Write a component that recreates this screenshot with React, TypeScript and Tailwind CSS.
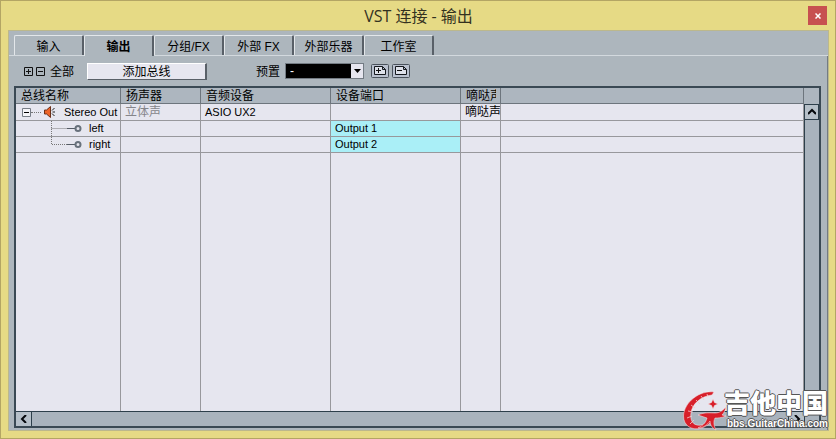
import React, { useState } from 'react';
import { clsx } from 'clsx';

const TABS = ['输入', '输出', '分组/FX', '外部 FX', '外部乐器', '工作室'];

const COLUMNS = ['总线名称', '扬声器', '音频设备', '设备端口', '嘀哒声', ''];

const CHANNELS = [
    { name: 'left', port: 'Output 1' },
    { name: 'right', port: 'Output 2' },
];

const HEAD_CELL = "h-4 p-0 pl-[5px] text-left font-normal whitespace-nowrap overflow-hidden border-r border-b border-[#6d757d] bg-[#adb6bf]";
const CELL = "h-4 p-0 pl-1 text-[11px] leading-[15px] whitespace-nowrap overflow-hidden border-r border-b border-[#98989c]";
const BODY_COLUMN = "p-0 border-r border-[#98989c]";

function SpeakerIcon() {
    return (
        <svg className="w-3 h-3 shrink-0" viewBox="0 0 12 12">
            <path d="M.5 4h2L6.500.5v11L2.500 8H.5z" fill="#ee6428" stroke="#6a2f18" />
            <path d="M8 4.500l2.500-2.500M8.500 6H11M8 7.500L10.500 10" stroke="#222" fill="none" />
        </svg>
    );
}

function PresetIcon({ plus }: { plus?: boolean }) {
    return (
        <svg className="w-[18px] h-[14px]" viewBox="0 0 18 14">
            <rect x=".5" y=".5" width="17" height="13" rx="1" fill="#b9c1cf" stroke="#4a525c" />
            <path d="M3.500 2.500h8l3 3v5h-11zM11.500 2.500v3h3" fill="#dde1ea" stroke="#14181e" />
            <path d={plus ? 'M5 6.500h5M7.500 4v5' : 'M5 6.500h5'} stroke="#111" />
        </svg>
    );
}

function Arrow({ d }: { d: string }) {
    return (
        <svg className="w-2 h-2" viewBox="0 0 8 8">
            <path d={d} fill="none" stroke="#05080c" strokeWidth="2" />
        </svg>
    );
}

function BusTable() {
    return (
        <table className="w-full table-fixed border-separate border-spacing-0 bg-[#e6e6ef]">
            <colgroup>
                <col className="w-[105px]" />
                <col className="w-[80px]" />
                <col className="w-[130px]" />
                <col className="w-[130px]" />
                <col className="w-[40px]" />
                <col />
            </colgroup>
            <thead>
                <tr>
                    {COLUMNS.map((name, i) => (
                        <th key={i} className={HEAD_CELL}>
                            <div className="mr-1 overflow-hidden h-[15px] leading-[17px]">{name}</div>
                        </th>
                    ))}
                </tr>
            </thead>
            <tbody>
                <tr className="h-[17px]">
                    <td className={CELL}>
                        <div className="flex items-center h-4 pl-[2px]">
                            <button aria-label="折叠" className="flex">
                                <svg className="w-[9px] h-[9px]" viewBox="0 0 9 9">
                                    <path d="M.5.5h8v8h-8z" fill="#f4f4f8" stroke="#777d86" />
                                    <path d="M2 4.500h5" stroke="#000" />
                                </svg>
                            </button>
                            <span className="w-[10px] mr-[3px] border-t border-dotted border-[#777]" />
                            <SpeakerIcon />
                            <span className="ml-2">Stereo Out</span>
                        </div>
                    </td>
                    <td className={CELL}>
                        <span className="text-[12px] text-[#85858a]">立体声</span>
                    </td>
                    <td className={CELL}>ASIO UX2</td>
                    <td className={CELL} />
                    <td className={CELL}>
                        <span className="text-[12px]">嘀哒声</span>
                    </td>
                    <td className={CELL} />
                </tr>
                {CHANNELS.map((ch, i) => (
                    <tr key={ch.name}>
                        <td className={CELL}>
                            <div className="flex items-center h-[15px] pl-[30px]">
                                <svg className="w-8 h-[15px]" viewBox="0 0 32 15">
                                    <path d={i === 0 ? 'M1.500 0v15M1.500 7.500H17' : 'M1.500 0v7.500H17'} fill="none" stroke="#777" strokeDasharray="1 1" />
                                    <path d="M17 7.500h8" stroke="#555c66" />
                                    <circle cx="28" cy="7.500" r="2.500" fill="#e6e6ef" stroke="#68717c" strokeWidth="2" />
                                </svg>
                                <span className="ml-[7px]">{ch.name}</span>
                            </div>
                        </td>
                        <td className={CELL} />
                        <td className={CELL} />
                        <td className={clsx(CELL, "bg-[#aaeff7]")}>{ch.port}</td>
                        <td className={CELL} />
                        <td className={CELL} />
                    </tr>
                ))}
                {/* empty area below the last bus */}
                <tr>
                    {COLUMNS.map((_, i) => (
                        <td key={i} className={BODY_COLUMN} />
                    ))}
                </tr>
            </tbody>
        </table>
    );
}

function Watermark() {
    return (
        <div className="absolute right-[7px] bottom-[7px] flex items-end pointer-events-none">
            <svg className="w-[44px] h-[40px]" viewBox="0 0 44 40">
                <g fill="#d81f2a" stroke="#f5f0f2" strokeWidth=".5">
                    <path d="M31 1C17-1 1 11 .5 25 .5 35 9 40 19 37c5-2 9-5 11-9l-4 1c-3 4-8 6-12 5-5-1-7-6-6-12C9 13 18 5 29 4z" />
                    <path d="M30 8l1.500 3.500L35 13l-3.500 1.500L30 18l-1.500-3.500L25 13l3.500-1.500z" />
                    <path d="M15 24c7-3 12-2 17-2 5 0 8-3 11-6-1 4-2 6-4 8l4 1c-5 2-8 2-11 2-2 4-1 8 1 12-4-2-6-5-6-9-3 4-7 7-12 7 6-3 8-6 9-10-3-1-6-2-9-3z" />
                </g>
                <path d="M13 9l4 4M18 5l3 4M8 14l4 3M5 20l5 1M4 27l5-2M7 33l4-4M24 3l1 3" stroke="#f3cccf" strokeWidth=".8" />
            </svg>
            <div className="-ml-[3px] flex flex-col items-end text-white [text-shadow:1px_0_#555,-1px_0_#555,0_1px_#555,0_-1px_#555]">
                <div className="text-[26px] leading-[26px] font-black">吉他中国</div>
                <div className="text-[10px] leading-[14px] font-bold">bbs.GuitarChina.com</div>
            </div>
        </div>
    );
}

export default function App() {
    const [active, setActive] = useState(1);

    return (
        <div className="relative min-h-screen flex flex-col pl-[7px] pr-[6px] pb-[7px] bg-[#e6da85] border border-[#b3a564] font-['Liberation_Sans','Noto_Sans_CJK_SC',sans-serif] text-[12px] text-black">
            <header className="relative h-[29px] flex items-center justify-center shrink-0">
                <h1 className="text-[16px] leading-5 text-[#33311f] font-['Open_Sans','Noto_Sans_CJK_SC',sans-serif]">VST 连接 - 输出</h1>
                <button aria-label="关闭" className="absolute right-[2px] top-[5px] w-[19px] h-[19px] flex items-center justify-center bg-[#c75050]">
                    <svg className="w-[6px] h-[6px]" viewBox="0 0 6 6">
                        <path d="M.5.5l5 5M5.500.5l-5 5" stroke="#fff" strokeWidth="1.500" />
                    </svg>
                </button>
            </header>

            <main className="grow flex flex-col bg-[#adb6bd] border border-[#bcb88c]">
                <nav className="flex h-[25px] pt-1 pl-[5px] border-b border-[#d3d9de]">
                    {TABS.map((tab, i) => (
                        <button
                            key={tab}
                            onClick={() => setActive(i)}
                            className={clsx(
                                "w-[70px] h-[20px] leading-[22px] rounded-t-[2px] border-t border-l border-[#e3e7ea] border-r-2 border-r-[#596068]",
                                i === active && "h-[21px] bg-[#adb6bd] font-bold"
                            )}
                        >
                            {tab}
                        </button>
                    ))}
                </nav>

                <section className="grow flex flex-col pl-[5px] pr-[6px] pb-[2px] border-r border-[#737b83]">
                    <div className="flex items-center h-[30px] pl-[10px]">
                        <button aria-label="全部展开" className="flex">
                            <svg className="w-[9px] h-[9px]" viewBox="0 0 9 9">
                                <path d="M.5.5h8v8h-8zM2 4.500h5M4.500 2v5" fill="none" stroke="#111" />
                            </svg>
                        </button>
                        <button aria-label="全部折叠" className="flex ml-[3px]">
                            <svg className="w-[9px] h-[9px]" viewBox="0 0 9 9">
                                <path d="M.5.5h8v8h-8zM2 4.500h5" fill="none" stroke="#111" />
                            </svg>
                        </button>
                        <span className="ml-[5px] pt-[2px]">全部</span>
                        <button className="ml-[13px] w-[120px] h-[17px] leading-[17px] bg-[#e6e6ef] border border-white border-r-2 border-r-[#596068] border-b-[#596068]">
                            添加总线
                        </button>
                        <label htmlFor="preset" className="ml-[49px] pt-[2px]">预置</label>
                        <div className="relative ml-[5px]">
                            <select id="preset" className="block w-[79px] h-4 pl-1 leading-[14px] appearance-none bg-black text-white border border-[#737b83]">
                                <option>-</option>
                            </select>
                            <span className="absolute right-px top-px w-3 h-[14px] flex items-center justify-center bg-[#e6e6ef] pointer-events-none">
                                <svg className="w-[7px] h-1" viewBox="0 0 7 4">
                                    <path d="M0 0h7L3.500 4z" />
                                </svg>
                            </span>
                        </div>
                        <button aria-label="保存预置" className="ml-[7px]"><PresetIcon plus /></button>
                        <button aria-label="删除预置" className="ml-[3px]"><PresetIcon /></button>
                    </div>

                    <div className="grow flex flex-col border-2 border-[#3a4954] bg-[#adb6bf]">
                        <div className="grow flex">
                            <BusTable />
                            <div className="w-[15px] shrink-0 flex flex-col pt-4">
                                <button aria-label="向上" className="h-4 flex items-center justify-center bg-[#b6c0c9] border border-[#2d3f4b]">
                                    <Arrow d="M0 6l4-4 4 4" />
                                </button>
                                <div className="grow border-l border-[#2d3f4b] bg-[#a9b3bd]" />
                            </div>
                        </div>
                        <div className="h-[15px] flex border-t border-[#2d3f4b] bg-[#a9b3bd]">
                            <button aria-label="向左" className="w-4 flex items-center justify-center bg-[#b6c0c9] border-r border-[#2d3f4b]">
                                <Arrow d="M6 0L2 4l4 4" />
                            </button>
                            <div className="grow" />
                            <button aria-label="向右" className="w-4 flex items-center justify-center bg-[#b6c0c9] border-l border-[#2d3f4b]">
                                <Arrow d="M2 0l4 4-4 4" />
                            </button>
                            <div className="w-[15px] border-l border-[#2d3f4b]" />
                        </div>
                    </div>
                </section>
            </main>

            <Watermark />
        </div>
    );
}
